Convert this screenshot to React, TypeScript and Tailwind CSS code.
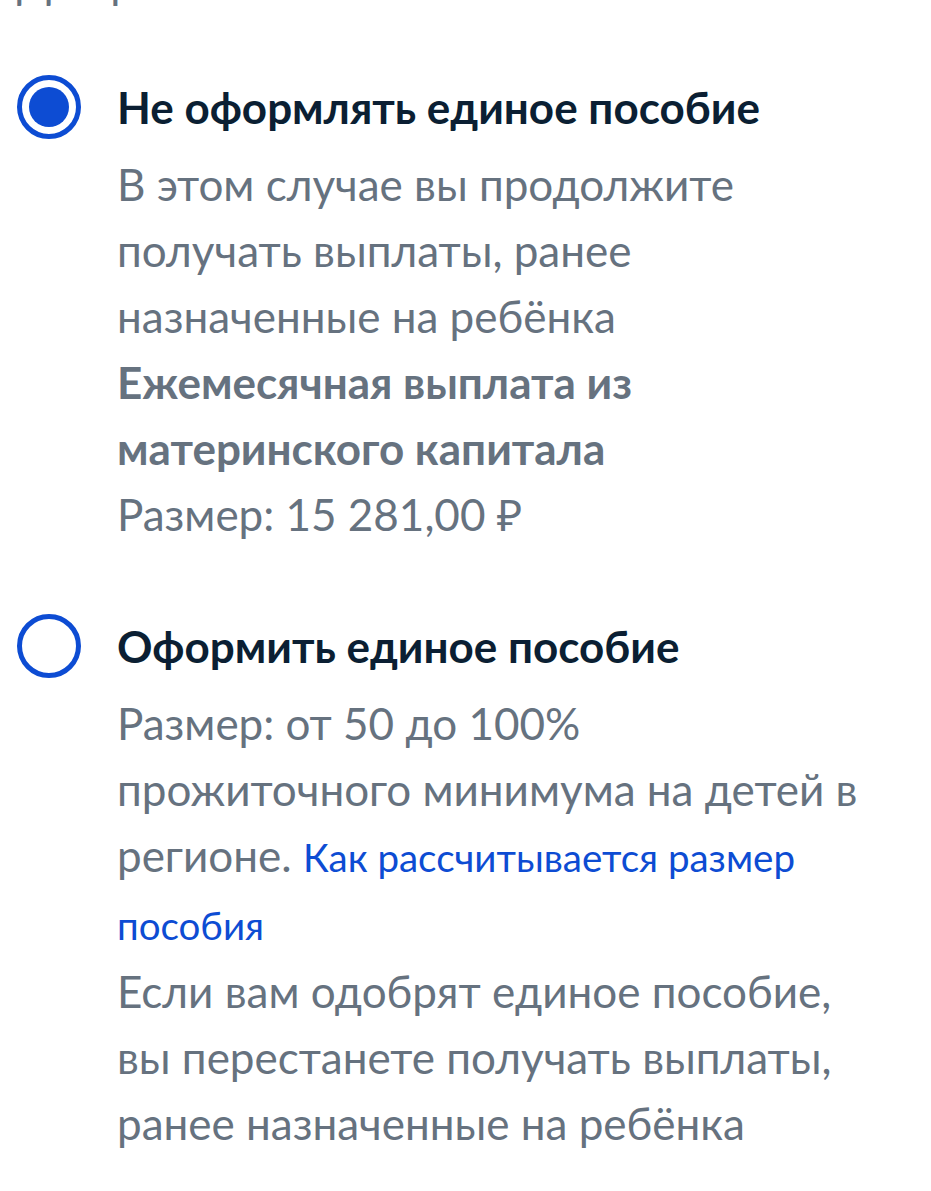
import React from 'react'

type Option = {
  title: string
  checked: boolean
  body: React.ReactNode
}

function Radio({ checked }: { checked: boolean }) {
  return (
    <span className="flex h-[64px] w-[64px] shrink-0 items-center justify-center rounded-full border-[5px] border-[#0d4cd3]">
      {checked && <span className="h-[40px] w-[40px] rounded-full bg-[#0d4cd3]" />}
    </span>
  )
}

const options: Option[] = [
  {
    title: 'Не оформлять единое пособие',
    checked: true,
    body: (
      <>
        <p>В этом случае вы продолжите получать выплаты, ранее назначенные на ребёнка</p>
        <p className="font-bold">Ежемесячная выплата из материнского капитала</p>
        <p>Размер: 15 281,00 ₽</p>
      </>
    ),
  },
  {
    title: 'Оформить единое пособие',
    checked: false,
    body: (
      <>
        <p>
          Размер: от 50 до 100% прожиточного минимума на детей в регионе.{' '}
          <a href="#" className="text-[38.5px] text-[#0d4cd3]">Как рассчитывается размер пособия</a>
        </p>
        <p>Если вам одобрят единое пособие, вы перестанете получать выплаты, ранее назначенные на ребёнка</p>
      </>
    ),
  },
]

export default function App() {
  return (
    <main
      className="min-h-screen overflow-hidden bg-white pl-[17px] pr-[64px]"
      style={{ fontFamily: 'Lato, "Noto Sans", sans-serif' }}
    >
      {/* descenders of the line above, cut by the top edge */}
      <p className="-mt-[52px] text-[44px] leading-[66px] text-[#66727f]">Для ребёнка</p>

      <div className="mt-[60px] flex flex-col gap-[66px]">
        {options.map(o => (
          <div key={o.title} className="flex gap-[36px]">
            <div className="flex h-[66px] items-center">
              <Radio checked={o.checked} />
            </div>
            <div>
              <p className="text-[44px] font-bold leading-[66px] text-[#0b1f33]">{o.title}</p>
              <div className="mt-[11px] text-[44px] leading-[66px] text-[#66727f]">{o.body}</div>
            </div>
          </div>
        ))}
      </div>
    </main>
  )
}
